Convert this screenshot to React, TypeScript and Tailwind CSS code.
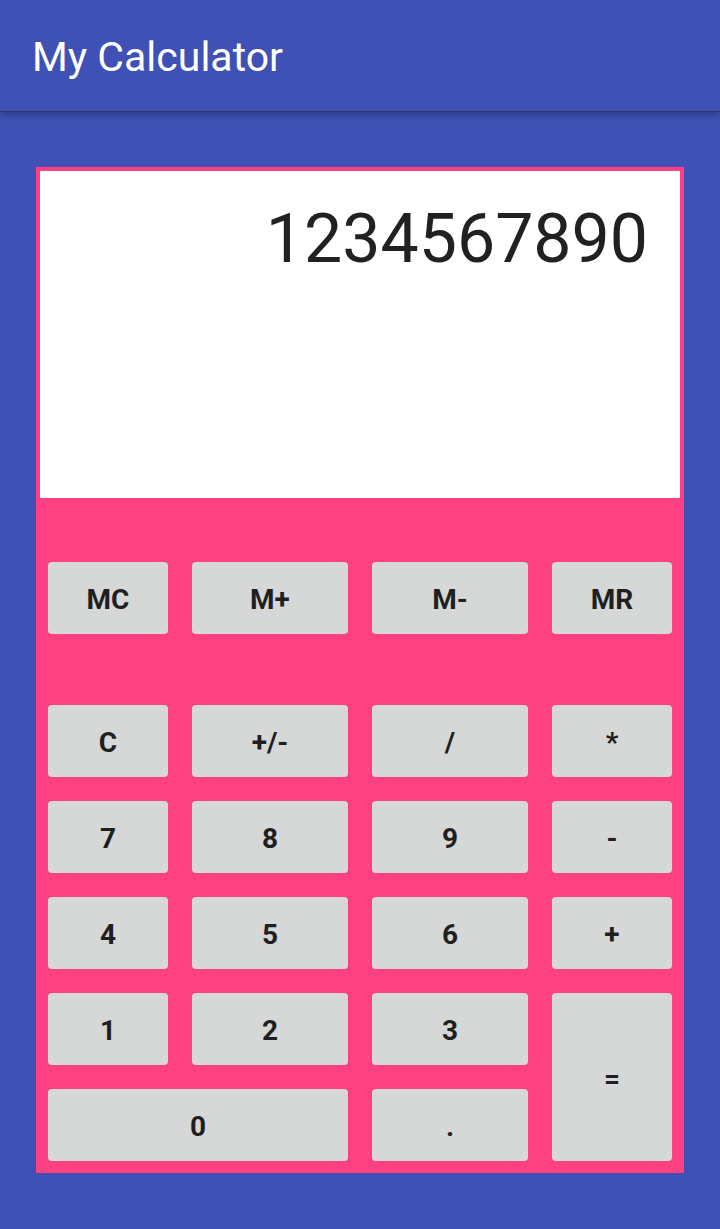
import { useState } from "react";

type Key = { label: string; name: string; span?: string };

const memoryKeys: Key[] = [
  { label: "MC", name: "Memory clear" },
  { label: "M+", name: "Memory add" },
  { label: "M-", name: "Memory subtract" },
  { label: "MR", name: "Memory recall" },
];

const mainKeys: Key[] = [
  { label: "C", name: "Clear" },
  { label: "+/-", name: "Change sign" },
  { label: "/", name: "Divide" },
  { label: "*", name: "Multiply" },
  { label: "7", name: "7" },
  { label: "8", name: "8" },
  { label: "9", name: "9" },
  { label: "-", name: "Subtract" },
  { label: "4", name: "4" },
  { label: "5", name: "5" },
  { label: "6", name: "6" },
  { label: "+", name: "Add" },
  { label: "1", name: "1" },
  { label: "2", name: "2" },
  { label: "3", name: "3" },
  { label: "=", name: "Equals", span: "row-span-2" },
  { label: "0", name: "0", span: "col-span-2" },
  { label: ".", name: "Decimal point" },
];

function KeyGrid({ keys, onPress }: { keys: Key[]; onPress: (label: string) => void }) {
  return (
    <div className="grid auto-rows-[minmax(72px,auto)] grid-cols-[10fr_13fr_13fr_10fr] gap-6">
      {keys.map((key) => (
        <button
          key={key.label}
          type="button"
          aria-label={key.name}
          onClick={() => onPress(key.label)}
          className={`flex items-center justify-center rounded bg-[#d6d7d7] pt-1 text-[28px] leading-8 font-bold text-[#1f1f1f] active:bg-[#c2c3c3] ${key.span ?? ""}`}
        >
          {key.label}
        </button>
      ))}
    </div>
  );
}

export default function App() {
  const [value, setValue] = useState("1234567890");

  const press = (label: string) => {
    if (label === "C") setValue("0");
    else if (/^[0-9]$/.test(label)) setValue((v) => (v === "0" ? label : v + label).slice(0, 14));
    else if (label === ".") setValue((v) => (v.includes(".") ? v : v + "."));
    else if (label === "+/-") setValue((v) => (v.startsWith("-") ? v.slice(1) : "-" + v));
  };

  return (
    <div className="flex min-h-screen flex-col bg-[#3f51b5] font-['Roboto','Liberation_Sans',sans-serif]">
      <header className="flex h-28 items-center border-b border-[#26316d] px-8 pt-0.5 shadow-[0_2px_8px_rgba(0,0,0,0.3)]">
        <h1 className="text-[41px] leading-12 font-normal text-white">My Calculator</h1>
      </header>
      <main className="flex flex-1 flex-col px-9 pt-[55px] pb-14">
        <section aria-label="Calculator" className="flex flex-1 flex-col border-4 border-[#ff4081] bg-[#ff4081]">
          <output
            aria-label="Display"
            className="min-h-60 flex-1 overflow-hidden bg-white px-8 pt-8 text-right text-[68px] leading-[72px] text-[#212121]"
          >
            {value}
          </output>
          <div className="flex flex-col gap-[71px] px-2 pt-16 pb-2">
            <KeyGrid keys={memoryKeys} onPress={press} />
            <KeyGrid keys={mainKeys} onPress={press} />
          </div>
        </section>
      </main>
    </div>
  );
}
